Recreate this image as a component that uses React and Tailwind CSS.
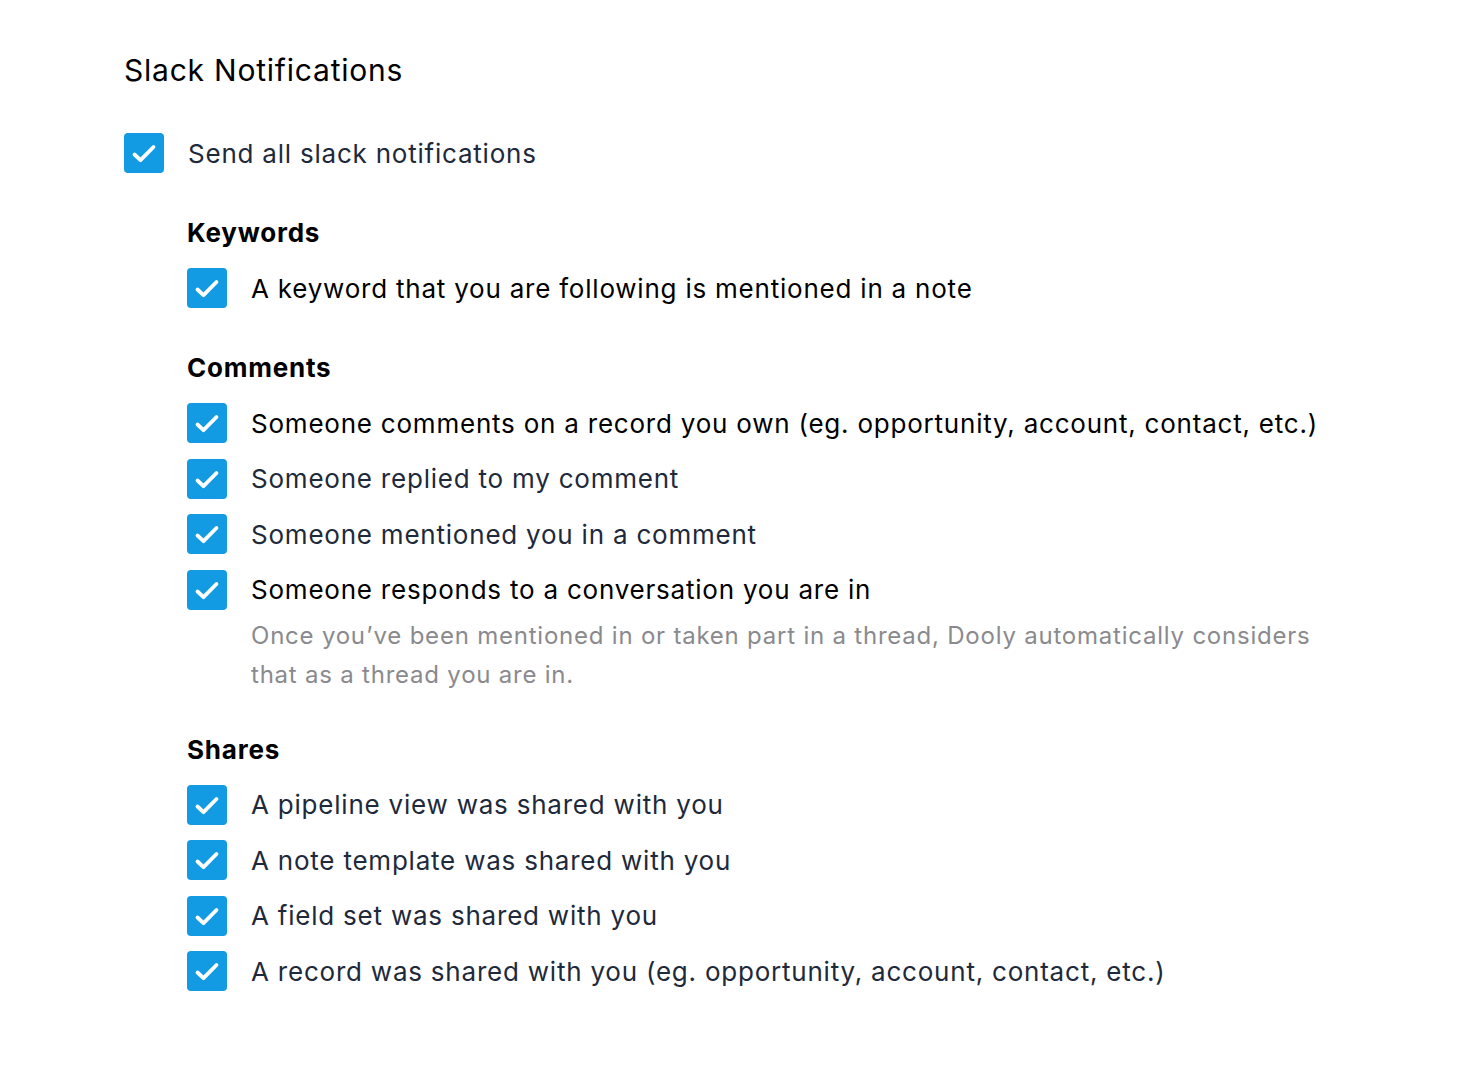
import React from "react";

const sections = [
  {
    title: "Keywords",
    items: [{ label: "A keyword that you are following is mentioned in a note", dark: true }],
  },
  {
    title: "Comments",
    items: [
      { label: "Someone comments on a record you own (eg. opportunity, account, contact, etc.)", dark: true },
      { label: "Someone replied to my comment" },
      { label: "Someone mentioned you in a comment" },
      {
        label: "Someone responds to a conversation you are in",
        dark: true,
        help: "Once you’ve been mentioned in or taken part in a thread, Dooly automatically considers that as a thread you are in.",
      },
    ],
  },
  {
    title: "Shares",
    tight: true,
    items: [
      { label: "A pipeline view was shared with you" },
      { label: "A note template was shared with you" },
      { label: "A field set was shared with you" },
      { label: "A record was shared with you (eg. opportunity, account, contact, etc.)" },
    ],
  },
];

const Checkbox = () => (
  <span className="flex h-10 w-10 shrink-0 rounded-[4px] bg-[#129be2]">
    <svg width="40" height="40" viewBox="0 0 40 40" fill="none">
      <path d="M10.5 21.5L16.5 27.2L29.5 14" stroke="white" strokeWidth="3.8" strokeLinecap="round" strokeLinejoin="round" />
    </svg>
  </span>
);

const Row = ({ label, dark, help }) => (
  <div>
    <div className="flex h-10 items-center gap-6">
      <Checkbox />
      <span className={dark ? "text-[26px] text-black" : "text-[26px] text-[#1e2a3b]"}>{label}</span>
    </div>
    {help && (
      <p className="mt-[6px] w-[1147px] pl-16 text-[24px] leading-[39px] text-[#8a8a8e]">{help}</p>
    )}
  </div>
);

export default function App() {
  return (
    <div className="min-h-screen bg-white pl-[124px] pr-[60px] pt-[52px] font-['Inter',sans-serif] tracking-[0.78px]">
      <h1 className="text-[30px] leading-9 text-black">Slack Notifications</h1>
      <div className="mt-[45px] flex h-10 items-center gap-6">
        <Checkbox />
        <span className="text-[26px] text-[#1e2a3b]">Send all slack notifications</span>
      </div>
      <div className="pl-[63px]">
        {sections.map((s) => (
          <div key={s.title} className={s.tight ? "mt-[38px]" : "mt-[42px]"}>
            <h2 className="mb-[17px] text-[26px] font-bold leading-9 text-black">{s.title}</h2>
            <div className="flex flex-col gap-[15.5px]">
              {s.items.map((it) => (
                <Row key={it.label} {...it} />
              ))}
            </div>
          </div>
        ))}
      </div>
    </div>
  );
}
